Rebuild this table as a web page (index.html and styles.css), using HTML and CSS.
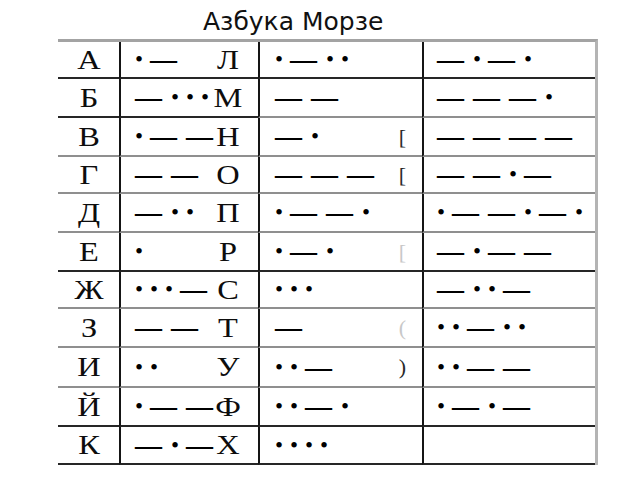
FILE: index.html
```html
<!DOCTYPE html>
<html lang="ru">
<head>
<meta charset="utf-8">
<title>Азбука Морзе</title>
<link rel="stylesheet" href="styles.css">
</head>
<body>
<h1 class="title">Азбука Морзе</h1>
<div class="table">
  <div class="row s k">
    <div class="c ch"><span class="let">А</span></div>
    <div class="c cm"><span class="mc"><span class="d">•</span><span class="h">—</span></span><span class="let">Л</span></div>
    <div class="c cr"><span class="mc"><span class="d">•</span><span class="h">—</span><span class="d">•</span><span class="d">•</span></span></div>
    <div class="c cx"><span class="mc"><span class="h">—</span><span class="d">•</span><span class="h">—</span><span class="d">•</span></span></div>
  </div>
  <div class="row mix">
    <div class="c ch"><span class="let">Б</span></div>
    <div class="c cm"><span class="mc"><span class="h">—</span><span class="d">•</span><span class="d">•</span><span class="d">•</span></span><span class="let">М</span></div>
    <div class="c cr"><span class="mc"><span class="h">—</span><span class="h">—</span></span></div>
    <div class="c cx"><span class="mc"><span class="h">—</span><span class="h">—</span><span class="h">—</span><span class="d">•</span></span></div>
  </div>
  <div class="row g">
    <div class="c ch"><span class="let">В</span></div>
    <div class="c cm"><span class="mc"><span class="d">•</span><span class="h">—</span><span class="h">—</span></span><span class="let">Н</span></div>
    <div class="c cr"><span class="mc"><span class="h">—</span><span class="d">•</span></span><span class="frag">[</span></div>
    <div class="c cx"><span class="mc"><span class="h">—</span><span class="h">—</span><span class="h">—</span><span class="h">—</span></span></div>
  </div>
  <div class="row s g">
    <div class="c ch"><span class="let">Г</span></div>
    <div class="c cm"><span class="mc"><span class="h">—</span><span class="h">—</span></span><span class="let">О</span></div>
    <div class="c cr"><span class="mc"><span class="h">—</span><span class="h">—</span><span class="h">—</span></span><span class="frag">[</span></div>
    <div class="c cx"><span class="mc"><span class="h">—</span><span class="h">—</span><span class="d">•</span><span class="h">—</span></span></div>
  </div>
  <div class="row g">
    <div class="c ch"><span class="let">Д</span></div>
    <div class="c cm"><span class="mc"><span class="h">—</span><span class="d">•</span><span class="d">•</span></span><span class="let">П</span></div>
    <div class="c cr"><span class="mc"><span class="d">•</span><span class="h">—</span><span class="h">—</span><span class="d">•</span></span></div>
    <div class="c cx"><span class="mc"><span class="d">•</span><span class="h">—</span><span class="h">—</span><span class="d">•</span><span class="h">—</span><span class="d">•</span></span></div>
  </div>
  <div class="row k">
    <div class="c ch"><span class="let">Е</span></div>
    <div class="c cm"><span class="mc"><span class="d">•</span></span><span class="let">Р</span></div>
    <div class="c cr"><span class="mc"><span class="d">•</span><span class="h">—</span><span class="d">•</span></span><span class="frag faint">[</span></div>
    <div class="c cx"><span class="mc"><span class="h">—</span><span class="d">•</span><span class="h">—</span><span class="h">—</span></span></div>
  </div>
  <div class="row s g">
    <div class="c ch"><span class="let">Ж</span></div>
    <div class="c cm"><span class="mc"><span class="d">•</span><span class="d">•</span><span class="d">•</span><span class="h">—</span></span><span class="let">С</span></div>
    <div class="c cr"><span class="mc"><span class="d">•</span><span class="d">•</span><span class="d">•</span></span></div>
    <div class="c cx"><span class="mc"><span class="h">—</span><span class="d">•</span><span class="d">•</span><span class="h">—</span></span></div>
  </div>
  <div class="row g">
    <div class="c ch"><span class="let">З</span></div>
    <div class="c cm"><span class="mc"><span class="h">—</span><span class="h">—</span></span><span class="let">Т</span></div>
    <div class="c cr"><span class="mc"><span class="h">—</span></span><span class="frag faint">(</span></div>
    <div class="c cx"><span class="mc"><span class="d">•</span><span class="d">•</span><span class="h">—</span><span class="d">•</span><span class="d">•</span></span></div>
  </div>
  <div class="row l g">
    <div class="c ch"><span class="let">И</span></div>
    <div class="c cm"><span class="mc"><span class="d">•</span><span class="d">•</span></span><span class="let">У</span></div>
    <div class="c cr"><span class="mc"><span class="d">•</span><span class="d">•</span><span class="h">—</span></span><span class="frag">)</span></div>
    <div class="c cx"><span class="mc"><span class="d">•</span><span class="d">•</span><span class="h">—</span><span class="h">—</span></span></div>
  </div>
  <div class="row k">
    <div class="c ch"><span class="let">Й</span></div>
    <div class="c cm"><span class="mc"><span class="d">•</span><span class="h">—</span><span class="h">—</span></span><span class="let">Ф</span></div>
    <div class="c cr"><span class="mc"><span class="d">•</span><span class="d">•</span><span class="h">—</span><span class="d">•</span></span></div>
    <div class="c cx"><span class="mc"><span class="d">•</span><span class="h">—</span><span class="d">•</span><span class="h">—</span></span></div>
  </div>
  <div class="row m k">
    <div class="c ch"><span class="let">К</span></div>
    <div class="c cm"><span class="mc"><span class="h">—</span><span class="d">•</span><span class="h">—</span></span><span class="let">Х</span></div>
    <div class="c cr"><span class="mc"><span class="d">•</span><span class="d">•</span><span class="d">•</span><span class="d">•</span></span></div>
    <div class="c cx"></div>
  </div>
</div>
</body>
</html>
```

FILE: styles.css
```css
* {
  box-sizing: border-box;
}

html, body {
  margin: 0;
  padding: 0;
  background: #ffffff;
  width: 640px;
  height: 480px;
  overflow: hidden;
}

.title {
  margin: 0;
  padding: 4px 0 0 203px;
  height: 39px;
  font-family: "DejaVu Sans", sans-serif;
  font-weight: normal;
  font-size: 25px;
  line-height: 35px;
  color: #111111;
}

.table {
  margin-left: 58px;
  width: 540px;
  border-top: 3px solid #a3a3a3;
  border-right: 3px solid #b4b4b4;
  font-family: "Liberation Serif", "Times New Roman", serif;
  color: #111111;
}

.row {
  --line: #262626;
  display: grid;
  grid-template-columns: 61px 139px 164px 173px;
  height: 39px;
}

.row.s { height: 37px; }
.row.m { height: 38px; }
.row.l { height: 40px; }

.row.k { --line: #262626; }
.row.g { --line: #8f8f8f; }
.row.mix { --line: #8f8f8f; }
.row.mix .ch,
.row.mix .cm { border-bottom-color: #262626; }

.c {
  display: flex;
  align-items: center;
  border-bottom: 2px solid var(--line);
  min-width: 0;
}

.ch {
  justify-content: center;
}

.cm {
  border-left: 2px solid #151515;
  justify-content: space-between;
  padding: 0 16px 0 14px;
}

.cr {
  border-left: 2px solid #151515;
  padding: 0 16px 0 15px;
}

.cx {
  border-left: 2px solid #151515;
  padding-left: 13px;
}

.let {
  display: inline-block;
  width: 28px;
  text-align: center;
  font-size: 27px;
  line-height: 1;
  transform: scaleX(1.2);
  padding-top: 1px;
  color: #0d0d0d;
}

.mc {
  display: inline-flex;
  align-items: center;
  gap: 9px;
}

.d {
  display: block;
  width: 6px;
  font-size: 23px;
  line-height: 1;
  text-align: center;
  white-space: nowrap;
  color: #000000;
}

.h {
  display: block;
  width: 27px;
  font-size: 27px;
  line-height: 1;
  font-weight: bold;
  white-space: nowrap;
  color: #000000;
}

.frag {
  margin-left: auto;
  font-size: 22px;
  line-height: 1;
  color: #2a2a2a;
}

.frag.faint {
  color: #c8c8c8;
}
```
